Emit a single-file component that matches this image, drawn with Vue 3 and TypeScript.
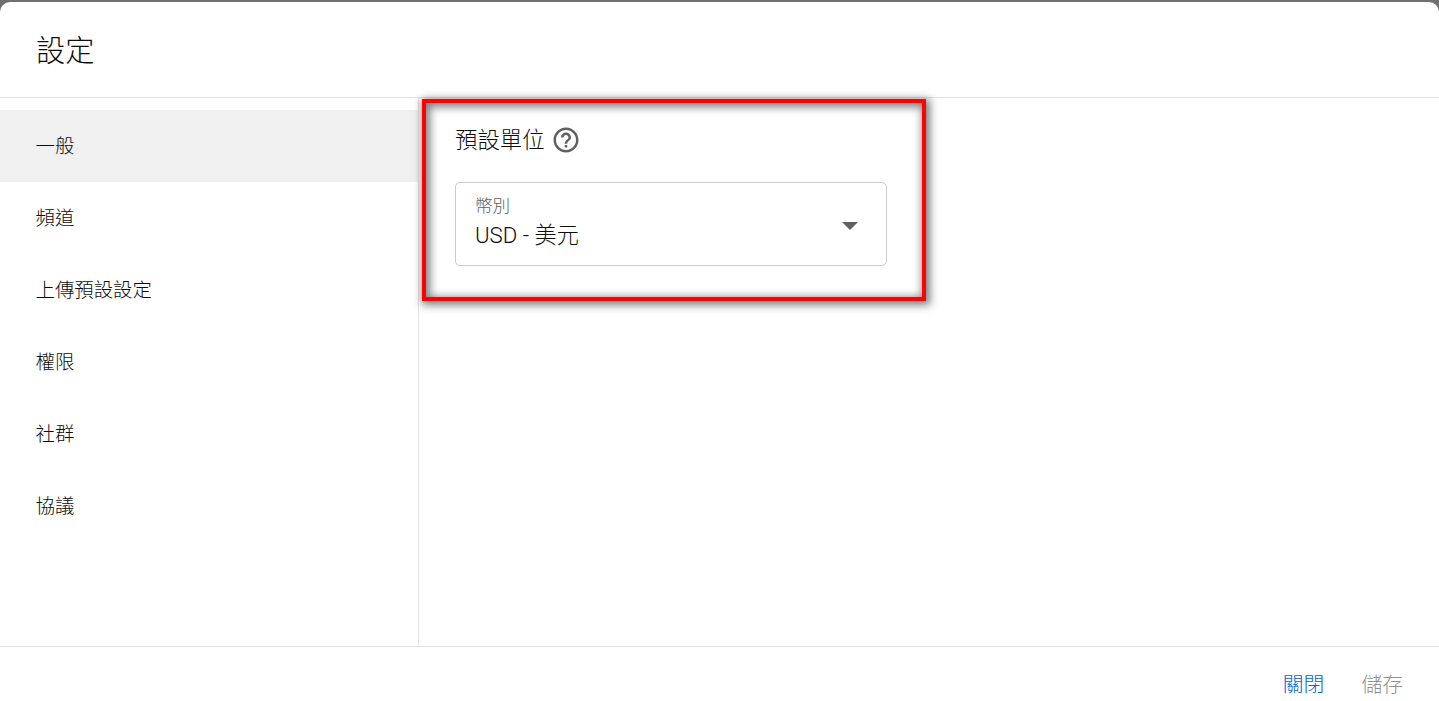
<script setup lang="ts">
const navItems: string[] = ['一般', '頻道', '上傳預設設定', '權限', '社群', '協議']
const activeIndex = 0
</script>

<template>
  <div class="backdrop">
    <section class="dialog">
      <header class="dialog-header">
        <h1 class="dialog-title">設定</h1>
      </header>
      <div class="dialog-body">
        <nav class="side-nav">
          <div
            v-for="(item, i) in navItems"
            :key="item"
            class="nav-item"
            :class="{ active: i === activeIndex }"
          >{{ item }}</div>
        </nav>
        <main class="content">
          <div class="section-title">
            <span>預設單位</span>
            <svg class="help" viewBox="0 0 24 24" width="30" height="30" aria-hidden="true">
              <path fill="#606060" d="M11 18h2v-2h-2v2zm1-16C6.48 2 2 6.48 2 12s4.48 10 10 10 10-4.48 10-10S17.52 2 12 2zm0 18c-4.41 0-8-3.59-8-8s3.59-8 8-8 8 3.59 8 8-3.59 8-8 8zm0-14c-2.21 0-4 1.79-4 4h2c0-1.1.9-2 2-2s2 .9 2 2c0 2-3 1.75-3 5h2c0-2.25 3-2.5 3-5 0-2.21-1.79-4-4-4z"/>
            </svg>
          </div>
          <div class="select">
            <div class="select-text">
              <div class="select-label">幣別</div>
              <div class="select-value">USD - 美元</div>
            </div>
            <span class="caret"></span>
          </div>
        </main>
      </div>
      <footer class="dialog-footer">
        <button class="btn primary" type="button">關閉</button>
        <button class="btn disabled" type="button">儲存</button>
      </footer>
    </section>
    <div class="highlight"></div>
  </div>
</template>

<style>
html, body { margin: 0; padding: 0; overflow: hidden; background: #6f6f6f; }
</style>

<style scoped>
.backdrop {
  position: relative;
  width: 1439px;
  height: 701px;
  overflow: hidden;
  padding-top: 2px;
  box-sizing: border-box;
  background: #6f6f6f;
  font-family: Roboto, "Noto Sans CJK TC", sans-serif;
  color: #0d0d0d;
}
.dialog {
  display: flex;
  flex-direction: column;
  height: 740px;
  background: #fff;
  border-radius: 10px 10px 0 0;
}
.dialog-header {
  height: 96px;
  box-sizing: border-box;
  flex: none;
  display: flex;
  align-items: center;
  padding-left: 36px;
  padding-top: 2px;
  border-bottom: 1px solid #e3e3e3;
}
.dialog-title {
  margin: 0;
  font-size: 29.2px;
  font-weight: 300;
  line-height: 40px;
  color: #0d0d0d;
}
.dialog-body {
  display: flex;
  height: 548px;
  flex: none;
}
.side-nav {
  width: 419px;
  flex: none;
  box-sizing: border-box;
  padding-top: 12px;
  border-right: 1px solid #e3e3e3;
}
.nav-item {
  height: 72px;
  box-sizing: border-box;
  display: flex;
  align-items: center;
  padding: 0 0 4px 35.5px;
  font-size: 19.4px;
  font-weight: 300;
}
.nav-item.active { background: #f0f0f0; }
.content {
  flex: 1;
  padding: 23px 0 0 36px;
}
.section-title {
  display: flex;
  align-items: center;
  gap: 6px;
  height: 34px;
  font-size: 22.4px;
  font-weight: 300;
}
.help { flex: none; margin-top: 3px; }
.select {
  display: flex;
  align-items: center;
  justify-content: space-between;
  width: 432px;
  height: 84px;
  box-sizing: border-box;
  margin-top: 27px;
  padding: 0 28px 0 19px;
  border: 1px solid #cccccc;
  border-radius: 5px;
}
.select-text { margin-top: -1px; }
.select-label {
  font-size: 17.6px;
  line-height: 22px;
  font-weight: 300;
  color: #606060;
}
.select-value {
  font-size: 22.2px;
  line-height: 36px;
  font-weight: 300;
  color: #0d0d0d;
}
.caret {
  width: 0;
  height: 0;
  margin-top: 4px;
  border-left: 8px solid transparent;
  border-right: 8px solid transparent;
  border-top: 8px solid #606060;
}
.dialog-footer {
  flex: none;
  display: flex;
  justify-content: flex-end;
  gap: 37px;
  padding: 0 36px 0 0;
  border-top: 1px solid #e3e3e3;
  height: 80px;
  box-sizing: border-box;
}
.btn {
  border: 0;
  background: none;
  padding: 0;
  height: 72px;
  font-family: inherit;
  font-size: 20.8px;
  font-weight: 300;
}
.btn.primary { color: #065fd4; }
.btn.disabled { color: #909090; }
.highlight {
  position: absolute;
  left: 422px;
  top: 99px;
  width: 504px;
  height: 202px;
  box-sizing: border-box;
  border: 4px solid #ff0000;
  box-shadow: 2px 2px 8px 2px rgba(0, 0, 0, 0.5), inset 2px 2px 8px 2px rgba(0, 0, 0, 0.5);
}
</style>
